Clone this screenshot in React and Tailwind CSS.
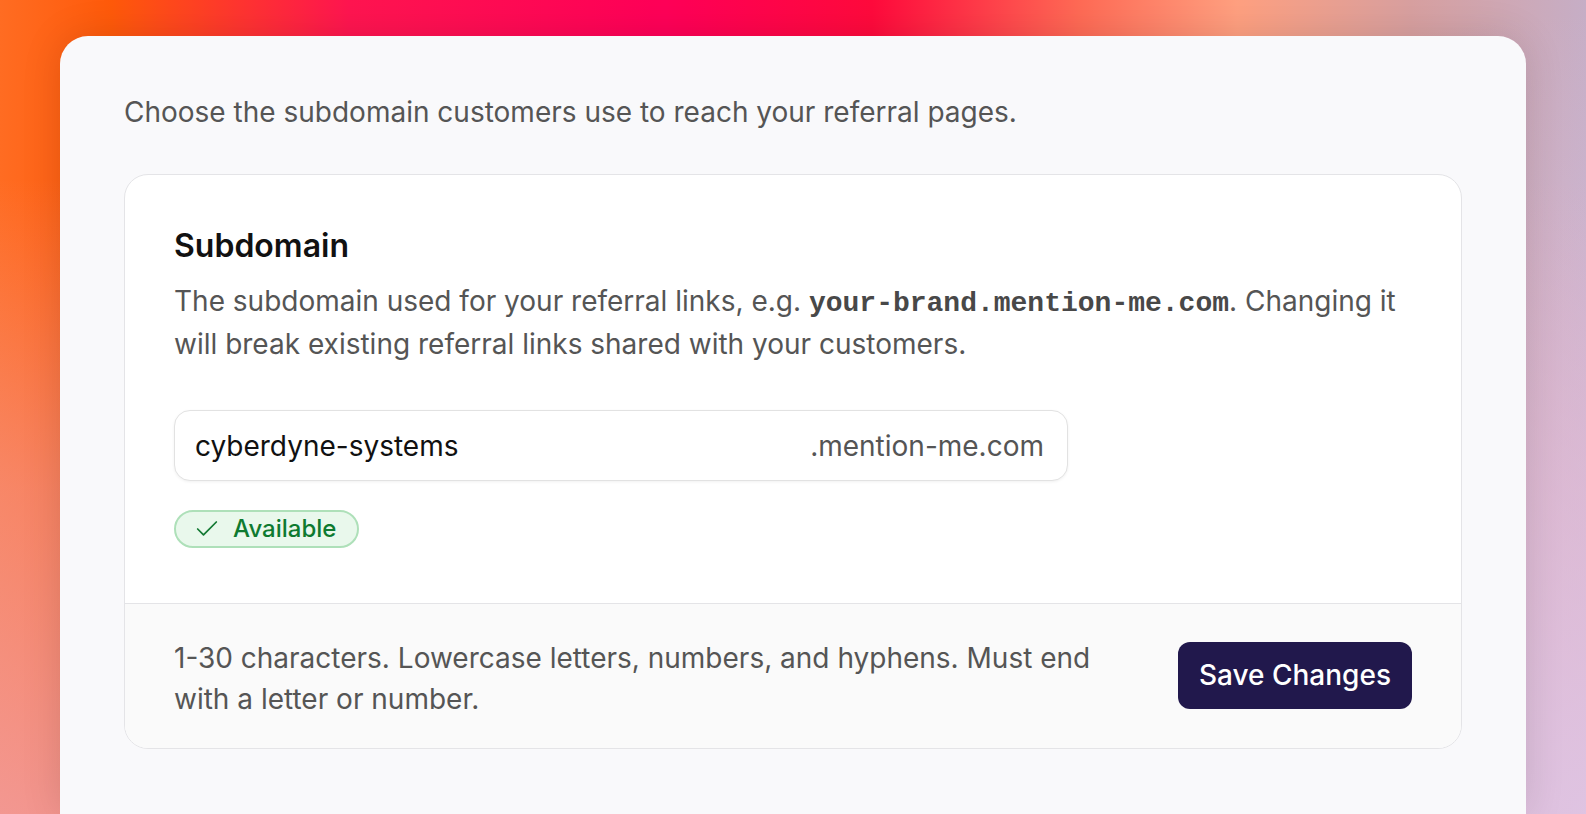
import React, { useState } from 'react';
import { Check } from 'lucide-react';

function App() {
  const [subdomain, setSubdomain] = useState('cyberdyne-systems');

  return (
    <div className="h-[814px] w-full overflow-hidden px-[60px] pt-9 font-['Inter',sans-serif] bg-[radial-gradient(circle_at_100%_100%,rgba(222,200,232,0.85)_0%,rgba(222,200,232,0)_45%),linear-gradient(180deg,rgba(238,168,188,0)_0%,rgba(238,168,188,0)_22%,rgba(238,168,188,0.45)_60%,rgba(238,168,188,0.72)_100%),linear-gradient(90deg,#ff6c22_0%,#ff5a0a_7%,#ff1550_22%,#ff0058_42%,#ff0a3c_55%,#ff6a55_68%,#ffa080_78%,#d8a0a0_89%,#c6aec6_100%)]">
      <div className="h-full rounded-t-[28px] bg-[#f9f9fb] px-16 pt-14 shadow-[0_0_40px_rgba(0,0,0,0.12)]">
        <p className="text-[28px] leading-[41px] text-[#555]">
          Choose the subdomain customers use to reach your referral pages.
        </p>

        {/* Subdomain card */}
        <div className="mt-[41px] overflow-hidden rounded-[24px] border border-[#e4e4e7] bg-white">
          <div className="px-[49px] pt-[49px] pb-[54px]">
            <h2 className="text-[32px] leading-[43px] font-semibold text-[#111]">Subdomain</h2>
            <p className="mt-[14px] text-[28px] leading-[41px] text-[#555]">
              The subdomain used for your referral links, e.g.{' '}
              <span className="font-['Liberation_Mono',monospace] font-bold text-[#484848]">your-brand.mention-me.com</span>. Changing it will break existing referral links shared with your customers.
            </p>

            <div className="mt-[45px] flex h-[71px] w-[894px] items-center rounded-2xl border border-[#e2e2e2] bg-white pl-5 pr-[23px] shadow-[0_1px_3px_rgba(0,0,0,0.06)]">
              <input
                type="text"
                value={subdomain}
                onChange={(e) => setSubdomain(e.target.value)}
                className="min-w-0 flex-1 bg-transparent text-[28px] text-[#111] outline-none"
              />
              <span className="text-[28px] text-[#555]">.mention-me.com</span>
            </div>

            <div className="mt-[29px] inline-flex h-[38px] items-center gap-3 rounded-full border-2 border-[#aee0b9] bg-[#e9f8ec] pl-[17px] pr-[21px]">
              <Check size={28} strokeWidth={1.5} className="text-[#147a34]" />
              <span className="text-[24px] font-medium text-[#0e7a30]">Available</span>
            </div>
          </div>

          {/* Footer */}
          <div className="flex items-center justify-between gap-12 border-t border-[#e4e4e7] bg-[#fafafa] px-[49px] pt-[34px] pb-[28px]">
            <p className="max-w-[930px] text-[28px] leading-[41px] text-[#555]">
              1-30 characters. Lowercase letters, numbers, and hyphens. Must end with a letter or number.
            </p>
            <button
              type="button"
              className="mb-2 h-[67px] shrink-0 rounded-xl bg-[#21184c] px-[21px] text-[28px] font-medium text-white"
            >
              Save Changes
            </button>
          </div>
        </div>
      </div>
    </div>
  );
}

export default App;
